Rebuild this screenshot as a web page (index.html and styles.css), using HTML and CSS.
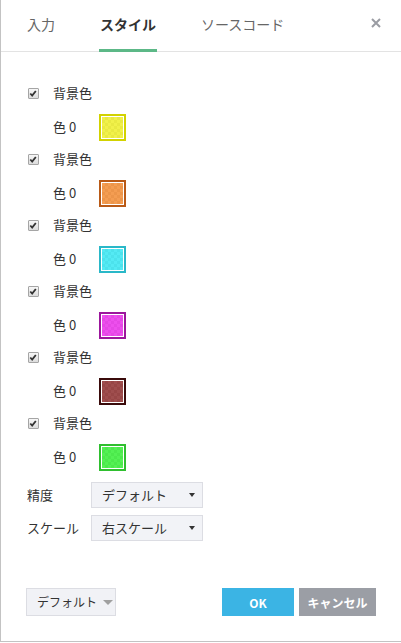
FILE: index.html
```html
<!DOCTYPE html>
<html lang="ja">
<head>
<meta charset="utf-8">
<link rel="stylesheet" href="styles.css">
</head>
<body>
<div class="dialog">
  <div class="header">
    <div class="tab">入力</div>
    <div class="tab active">スタイル</div>
    <div class="tab">ソースコード</div>
    <div class="close"><svg width="10" height="10" viewBox="0 0 10 10"><path d="M1 1L9 9M9 1L1 9" stroke="#9a9ca3" stroke-width="2"/></svg></div>
  </div>
  <div class="content">
    <div class="group">
      <div class="check-row"><span class="cb"><svg width="11" height="11" viewBox="0 0 11 11"><path d="M2.5 5.5L4.6 7.8L8.6 2.8" fill="none" stroke="#333" stroke-width="2"/></svg></span><span>背景色</span></div>
      <div class="color-row"><span>色 0</span><span class="swatch yellow"><i></i></span></div>
    </div>
    <div class="group">
      <div class="check-row"><span class="cb"><svg width="11" height="11" viewBox="0 0 11 11"><path d="M2.5 5.5L4.6 7.8L8.6 2.8" fill="none" stroke="#333" stroke-width="2"/></svg></span><span>背景色</span></div>
      <div class="color-row"><span>色 0</span><span class="swatch orange"><i></i></span></div>
    </div>
    <div class="group">
      <div class="check-row"><span class="cb"><svg width="11" height="11" viewBox="0 0 11 11"><path d="M2.5 5.5L4.6 7.8L8.6 2.8" fill="none" stroke="#333" stroke-width="2"/></svg></span><span>背景色</span></div>
      <div class="color-row"><span>色 0</span><span class="swatch cyan"><i></i></span></div>
    </div>
    <div class="group">
      <div class="check-row"><span class="cb"><svg width="11" height="11" viewBox="0 0 11 11"><path d="M2.5 5.5L4.6 7.8L8.6 2.8" fill="none" stroke="#333" stroke-width="2"/></svg></span><span>背景色</span></div>
      <div class="color-row"><span>色 0</span><span class="swatch magenta"><i></i></span></div>
    </div>
    <div class="group">
      <div class="check-row"><span class="cb"><svg width="11" height="11" viewBox="0 0 11 11"><path d="M2.5 5.5L4.6 7.8L8.6 2.8" fill="none" stroke="#333" stroke-width="2"/></svg></span><span>背景色</span></div>
      <div class="color-row"><span>色 0</span><span class="swatch maroon"><i></i></span></div>
    </div>
    <div class="group">
      <div class="check-row"><span class="cb"><svg width="11" height="11" viewBox="0 0 11 11"><path d="M2.5 5.5L4.6 7.8L8.6 2.8" fill="none" stroke="#333" stroke-width="2"/></svg></span><span>背景色</span></div>
      <div class="color-row"><span>色 0</span><span class="swatch green"><i></i></span></div>
    </div>
    <div class="fields">
      <span class="label">精度</span>
      <div class="select"><span>デフォルト</span><span class="caret"></span></div>
      <span class="label">スケール</span>
      <div class="select"><span>右スケール</span><span class="caret"></span></div>
    </div>
  </div>
  <div class="footer">
    <div class="btn-default"><span>デフォルト</span><span class="caret light"></span></div>
    <div class="spacer"></div>
    <div class="btn ok">OK</div>
    <div class="btn cancel">キャンセル</div>
  </div>
</div>
</body>
</html>
```
FILE: styles.css
```css
* { box-sizing: border-box; }
html, body { margin: 0; padding: 0; background: #fff; }
body {
  font-family: "Noto Sans CJK JP", "Noto Sans", sans-serif;
  font-size: 13px;
  color: #333;
}
.dialog {
  width: 401px;
  height: 642px;
  border-left: 1px solid #c3c3c3;
  border-bottom: 1px solid #c3c3c3;
  display: flex;
  flex-direction: column;
}
.header {
  height: 52px;
  border-bottom: 1px solid #e3e3e3;
  display: flex;
  align-items: flex-start;
  padding-left: 26px;
  gap: 45px;
  position: relative;
}
.tab {
  font-size: 14px;
  line-height: 20px;
  padding-top: 14px;
  height: 51px;
  color: #666;
  position: relative;
}
.tab.active {
  color: #333;
  font-weight: bold;
}
.tab.active::after {
  content: "";
  position: absolute;
  left: -1px;
  right: -1px;
  bottom: -1px;
  height: 3px;
  background: #5cb887;
}
.close {
  margin-left: auto;
  margin-right: 20px;
  padding-top: 18px;
  line-height: 0;
}
.content {
  padding: 30px 0 0 26px;
}
.check-row {
  height: 22px;
  margin-bottom: 6px;
  display: flex;
  align-items: center;
  line-height: 18px;
}
.cb {
  width: 11px;
  height: 11px;
  border: 1px solid #a5a5a5;
  border-radius: 1px;
  background: linear-gradient(#f7f7f7, #dcdcdc);
  margin-left: 1px;
  margin-right: 14px;
  display: inline-flex;
  line-height: 0;
}
.cb svg { margin: -1px 0 0 -1px; }
.color-row {
  height: 34px;
  margin-bottom: 4px;
  display: flex;
  align-items: center;
  padding-left: 26px;
  line-height: 18px;
}
.color-row > span:first-child { width: 46px; }
.swatch {
  width: 27px;
  height: 27px;
  border: 2px solid;
  padding: 1px;
  background: #fff;
  display: inline-block;
}
.swatch i {
  display: block;
  width: 100%;
  height: 100%;
  background-color: #fff;
  background-image: conic-gradient(#c8c8c8 25%, transparent 0 50%, #c8c8c8 0 75%, transparent 0);
  background-size: 6px 6px;
  position: relative;
}
.swatch i::after {
  content: "";
  position: absolute;
  inset: 0;
  background: var(--c);
  opacity: 0.85;
}
.yellow { border-color: #d2d200; --c: #eeee2a; }
.orange { border-color: #b95a17; --c: #f28c34; }
.cyan { border-color: #2ab8c8; --c: #36e6f2; }
.magenta { border-color: #9c169c; --c: #ea30ea; }
.maroon { border-color: #3a0b0b; --c: #8e2f2f; }
.green { border-color: #2fbf2f; --c: #36ee36; }
.fields {
  margin-top: 8px;
  display: grid;
  grid-template-columns: 64px 112px;
  row-gap: 7px;
  align-items: center;
}
.label { line-height: 18px; }
.select {
  height: 26px;
  background: #f2f3f7;
  border: 1px solid #dcdde3;
  display: flex;
  align-items: center;
  padding-left: 10px;
  padding-right: 7px;
  line-height: 18px;
  font-size: 13px;
}
.caret {
  margin-left: auto;
  flex-shrink: 0;
  width: 0;
  height: 0;
  border-left: 3.5px solid transparent;
  border-right: 3.5px solid transparent;
  border-top: 4px solid #333;
}
.caret.light {
  border-left-width: 5px;
  border-right-width: 5px;
  border-top: 5px solid #a0a0a0;
  margin-left: 6px;
}
.footer {
  margin-top: auto;
  margin-bottom: 25px;
  padding: 0 25px 0 25px;
  display: flex;
  align-items: center;
  gap: 5px;
}
.btn-default {
  width: 90px;
  height: 28px;
  background: #f1f2f6;
  border: 1px solid #dcdde3;
  display: flex;
  align-items: center;
  padding-left: 10px;
  font-size: 12px;
  line-height: 16px;
  white-space: nowrap;
}
.spacer { flex: 1; }
.btn {
  height: 28px;
  display: flex;
  align-items: center;
  justify-content: center;
  color: #fff;
  font-weight: bold;
  font-size: 12px;
  white-space: nowrap;
}
.ok { width: 72px; background: #3bb4e4; }
.cancel { width: 77px; background: #9b9ea5; }
```
